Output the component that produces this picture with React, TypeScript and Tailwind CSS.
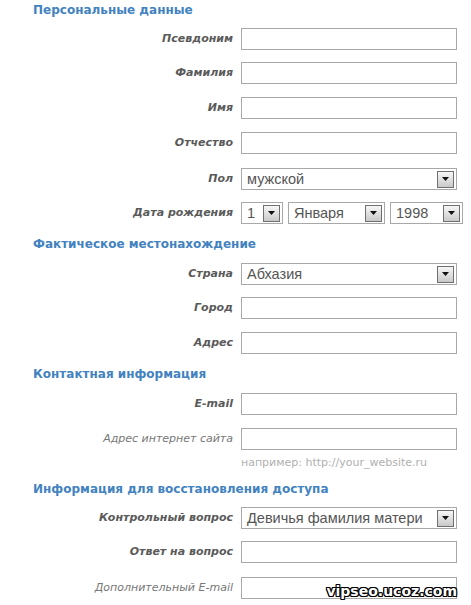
import React from 'react';

const labelBase = 'w-[241px] shrink-0 pr-[8px] text-right text-[11px] italic text-[#5a5a5a] leading-[22px]';

function Arrow() {
  return (
    <div className="w-[17px] h-[17px] border border-[#6f6f6f] bg-gradient-to-b from-[#f7f7f7] to-[#c9c9c9] flex items-center justify-center shrink-0">
      <svg width="7" height="4" viewBox="0 0 7 4">
        <path d="M0 0h7L3.5 4z" fill="#111" />
      </svg>
    </div>
  );
}

function Heading({ children, className = '' }: { children: React.ReactNode; className?: string }) {
  return (
    <div className={`h-[20px] pl-[33px] flex items-center text-[12px] font-bold text-[#4282c0] ${className}`}>
      {children}
    </div>
  );
}

function Row({
  label,
  bold = true,
  top = false,
  className = '',
  children,
}: {
  label: string;
  bold?: boolean;
  top?: boolean;
  className?: string;
  children?: React.ReactNode;
}) {
  return (
    <div className={`flex h-[22px] ${className}`}>
      <div
        className={`${labelBase} ${bold ? 'font-bold' : 'text-[#777]'} ${top ? 'leading-[16px]' : ''}`}
      >
        {label}
      </div>
      {children ?? <div className="w-[216px] h-[22px] border border-[#a8a8a8] bg-white" />}
    </div>
  );
}

function Select({ value, w }: { value: string; w: string }) {
  return (
    <div
      className={`${w} h-[22px] border border-[#a8a8a8] bg-white flex items-center justify-between pl-[5px] pr-[2px]`}
      style={{ fontFamily: '"Liberation Sans", Arial, sans-serif' }}
    >
      <span className="text-[14.5px] text-[#555] leading-none">{value}</span>
      <Arrow />
    </div>
  );
}

export default function App() {
  return (
    <div
      className="relative w-[471px] h-[605px] bg-white overflow-hidden"
      style={{ fontFamily: '"DejaVu Sans", Verdana, sans-serif' }}
    >
      <Heading>Персональные данные</Heading>
      <div className="mt-[8px] flex flex-col">
        <Row label="Псевдоним" />
        <Row label="Фамилия" className="mt-[12px]" />
        <Row label="Имя" className="mt-[13px]" />
        <Row label="Отчество" className="mt-[13px]" />
        <Row label="Пол" className="mt-[14px]">
          <Select value="мужской" w="w-[216px]" />
        </Row>
        <Row label="Дата рождения" className="mt-[12px]">
          <div className="flex gap-[5px]">
            <Select value="1" w="w-[42px]" />
            <Select value="Января" w="w-[97px]" />
            <Select value="1998" w="w-[73px]" />
          </div>
        </Row>
      </div>

      <Heading className="mt-[10px]">Фактическое местонахождение</Heading>
      <div className="mt-[9px] flex flex-col">
        <Row label="Страна">
          <Select value="Абхазия" w="w-[216px]" />
        </Row>
        <Row label="Город" className="mt-[12px]" />
        <Row label="Адрес" className="mt-[13px]" />
      </div>

      <Heading className="mt-[10px]">Контактная информация</Heading>
      <div className="mt-[9px] flex flex-col">
        <Row label="E-mail" />
        <Row label="Адрес интернет сайта" bold={false} top className="mt-[13px]" />
        <div className="mt-[7px] pl-[241px] h-[12px] text-[11px] leading-[12px] text-[#b0b0b0]">
          например: http://your_website.ru
        </div>
      </div>

      <Heading className="mt-[10px]">Информация для восстановления доступа</Heading>
      <div className="mt-[8px] flex flex-col">
        <Row label="Контрольный вопрос">
          <Select value="Девичья фамилия матери" w="w-[216px]" />
        </Row>
        <Row label="Ответ на вопрос" className="mt-[12px]" />
        <Row label="Дополнительный E-mail" bold={false} top className="mt-[14px]" />
      </div>

      <div
        className="absolute right-[14px] bottom-[3px] text-[14px] font-bold text-white tracking-[0px]"
        style={{
          fontFamily: '"DejaVu Sans", Verdana, sans-serif',
          textShadow:
            '1px 0 0 #000, -1px 0 0 #000, 0 1px 0 #000, 0 -1px 0 #000, 1px 1px 0 #000, -1px -1px 0 #000, 1px -1px 0 #000, -1px 1px 0 #000',
        }}
      >
        vipseo.ucoz.com
      </div>
    </div>
  );
}
